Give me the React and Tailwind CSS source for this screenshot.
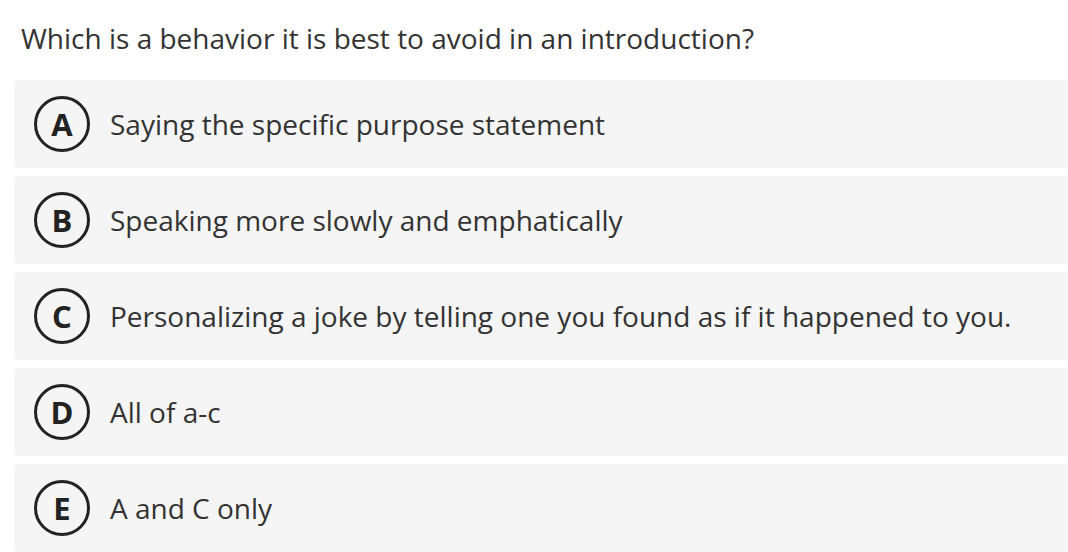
import React from "react";

const options = [
  { letter: "A", text: "Saying the specific purpose statement" },
  { letter: "B", text: "Speaking more slowly and emphatically" },
  { letter: "C", text: "Personalizing a joke by telling one you found as if it happened to you." },
  { letter: "D", text: "All of a-c" },
  { letter: "E", text: "A and C only" },
];

export default function App() {
  return (
    <div
      className="w-[1068px] h-[552px] overflow-hidden bg-white text-[#333333]"
      style={{ fontFamily: '"Open Sans", "Liberation Sans", sans-serif' }}
    >
      <div className="pl-[21px] pt-[19px] h-[80px] text-[28px] leading-[38px]">
        Which is a behavior it is best to avoid in an introduction?
      </div>
      <div className="pl-[14px] flex flex-col gap-[8px]">
        {options.map((o) => (
          <div
            key={o.letter}
            className="h-[88px] w-[1080px] bg-[#f5f5f5] rounded-[4px] flex items-center pl-[20px]"
          >
            <div className="w-[56px] h-[56px] shrink-0 rounded-full border-[3.5px] border-[#222222] flex items-center justify-center text-[31px] font-bold leading-none text-[#222222]">
              {o.letter}
            </div>
            <div className="ml-[20px] text-[28px] leading-[38px] text-[#333333]">{o.text}</div>
          </div>
        ))}
      </div>
    </div>
  );
}
